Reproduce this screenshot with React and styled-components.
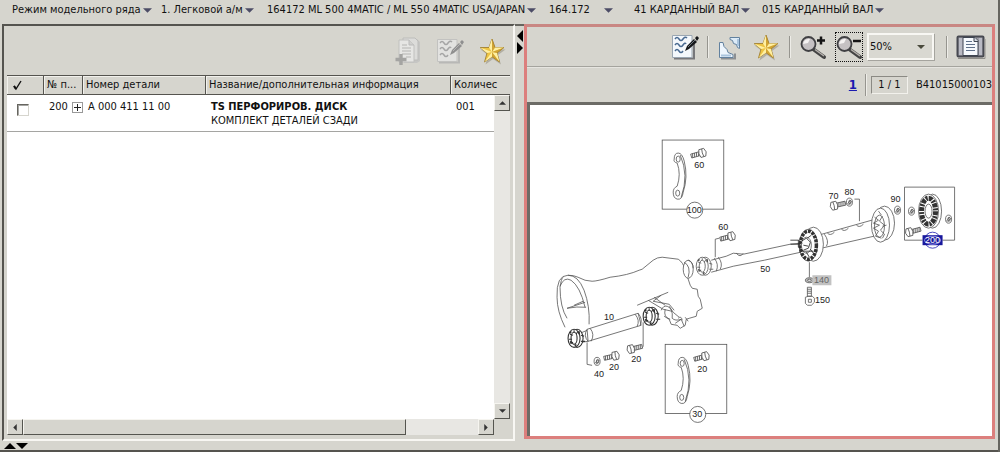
import React from 'react'
import styled, { createGlobalStyle, css } from 'styled-components'

const menuItems = [
  { text: 'Режим модельного ряда', width: 149 },
  { text: '1. Легковой а/м', width: 106 },
  { text: '164172 ML 500 4MATIC / ML 550 4MATIC USA/JAPAN', width: 282 },
  { text: '164.172', width: 85, wide: true },
  { text: '41 КАРДАННЫЙ ВАЛ', width: 128 },
  { text: '015 КАРДАННЫЙ ВАЛ', width: 140 },
]

const App = () => {
  return (
    <Page>
      <GlobalStyle />
      <MenuBar>
        {menuItems.map((item) => (
          <MenuButton key={item.text} $width={item.width} $wide={item.wide}>
            {item.text}
            <Triangle dir="down" size={9} color="#4c4c66" />
          </MenuButton>
        ))}
      </MenuBar>
      <Main>
        <PartsPanel />
        <Splitter>
          <Triangle dir="left" size={12} color="#000" />
          <Triangle dir="right" size={12} color="#000" />
        </Splitter>
        <PicturePanel />
      </Main>
      <BottomSplitter>
        <Triangle dir="up" size={12} color="#000" />
        <Triangle dir="down" size={12} color="#000" />
      </BottomSplitter>
    </Page>
  )
}

const PartsPanel = () => (
  <Panel>
    <PartsToolbar>
      <IconButton $width={28} aria-label="Добавить" disabled><CopyIcon /></IconButton>
      <IconButton $width={28} aria-label="Заметка" disabled><NoteIcon faded /></IconButton>
      <IconButton $width={28} aria-label="Избранное"><StarIcon /></IconButton>
    </PartsToolbar>
    <TableFrame>
      <TableArea>
        <Table>
          <colgroup>
            <col width="37" />
            <col width="39" />
            <col width="123" />
            <col width="245" />
            <col />
          </colgroup>
          <thead>
            <tr>
              <Th aria-label="Выбор"><CheckMark /></Th>
              <Th>№ п...</Th>
              <Th>Номер детали</Th>
              <Th>Название/дополнительная информация</Th>
              <Th>Количес</Th>
            </tr>
          </thead>
          <tbody>
            <tr>
              <Td><Check type="checkbox" aria-label="Выбрать деталь 200" /></Td>
              <Td>
                <Position>
                  200
                  <Expand aria-label="Развернуть">
                    <svg width="7" height="7"><path d="M0 3.5h7M3.5 0v7" stroke="#222" /></svg>
                  </Expand>
                </Position>
              </Td>
              <Td $indent>A 000 411 11 00</Td>
              <Td $indent><b>TS ПЕРФОРИРОВ. ДИСК</b><br />КОМПЛЕКТ ДЕТАЛЕЙ СЗАДИ</Td>
              <Td $indent>001</Td>
            </tr>
          </tbody>
        </Table>
      </TableArea>
      <VerticalBar>
        <ScrollButton aria-label="Вверх"><Triangle dir="up" size={7} color="#333" /></ScrollButton>
        <ScrollButton aria-label="Вниз"><Triangle dir="down" size={7} color="#333" /></ScrollButton>
      </VerticalBar>
      <HorizontalBar>
        <ScrollButton aria-label="Влево"><Triangle dir="left" size={7} color="#333" /></ScrollButton>
        <Track><Thumb /></Track>
        <ScrollButton aria-label="Вправо"><Triangle dir="right" size={7} color="#333" /></ScrollButton>
      </HorizontalBar>
    </TableFrame>
  </Panel>
)

const PicturePanel = () => (
  <RedPanel>
    <PictureToolbar>
      <IconButton $width={28} aria-label="Заметка"><NoteIcon /></IconButton>
      <Divider />
      <IconButton $width={26} aria-label="Ссылка"><LinkIcon /></IconButton>
      <IconButton $width={30} aria-label="Избранное"><StarIcon /></IconButton>
      <Divider />
      <IconButton $width={28} aria-label="Увеличить"><ZoomIcon plus /></IconButton>
      <ZoomGroup>
        <IconButton $width={28} $focused aria-label="Уменьшить"><ZoomIcon /></IconButton>
        <SelectBox>
          <select aria-label="Масштаб" defaultValue="50%">
            <option>50%</option>
            <option>100%</option>
          </select>
          <Triangle dir="down" size={8} color="#4a4a3c" />
        </SelectBox>
      </ZoomGroup>
      <Divider />
      <IconButton $width={30} aria-label="Страница"><BookIcon /></IconButton>
    </PictureToolbar>
    <PageBar>
      <PageLink href="#1">1</PageLink>
      <PageInfo>
        <Divider />
        <Counter>1 / 1</Counter>
      </PageInfo>
      <span>B41015000103</span>
    </PageBar>
    <Canvas>
      <Diagram />
    </Canvas>
  </RedPanel>
)

const points = {
  down: '0,0 10,0 5,5',
  up: '0,5 10,5 5,0',
  left: '5,0 5,10 0,5',
  right: '0,0 0,10 5,5',
}

const Triangle = ({ dir, size, color }) => {
  const flat = dir === 'up' || dir === 'down'
  return (
    <svg
      width={flat ? size : Math.ceil(size / 2)}
      height={flat ? Math.ceil(size / 2) : size}
      viewBox={flat ? '0 0 10 5' : '0 0 5 10'}
      aria-hidden="true"
    >
      <polygon points={points[dir]} fill={color} />
    </svg>
  )
}

const CheckMark = () => (
  <svg width="10" height="11" viewBox="0 0 10 11">
    <path d="M1 6l2 3L8 1" fill="none" stroke="#111" strokeWidth="1.4" />
    <path d="M1 6l2 3" stroke="#111" strokeWidth="2" />
  </svg>
)

const CopyIcon = () => (
  <svg width="28" height="30" viewBox="0 0 28 30">
    <path d="M10 3h13l3 3v19l-3 2H10z" fill="#c6c6c4" />
    <path d="M9 2h12l3 3v19H9z" fill="#dcdcda" stroke="#bcbcba" />
    <path d="M5 4h10l5 5v17H5z" fill="#e6e6e4" stroke="#c0c0be" />
    <path d="M15 4v5h5" fill="#d0d0ce" stroke="#bababa" />
    <path d="M8 9h5M8 12h9M8 15h9M8 18h9M12 21h5" stroke="#b4b4b2" />
    <path d="M7 18v11M1.500 23.500h11" stroke="#a4a4a2" strokeWidth="3.400" />
  </svg>
)

const NoteIcon = ({ faded }) => {
  const ink = faded ? '#a5a5a5' : '#496a91'
  return (
    <svg width="28" height="28" viewBox="0 0 28 28">
      <path d="M3 25.500h20V9" fill="none" stroke={faded ? '#b8b8b6' : '#77777a'} strokeWidth="2" />
      <path d="M1.500 2.500h19.500v22H1.500z" fill={faded ? '#e2e2e0' : '#f4f8fc'} stroke={faded ? '#c2c2c0' : '#9aa6b2'} />
      <path
        d="M4 6q2-3 4 0t4 0 4-1M4 12q2-3 4 0t4 0 3-1M4 18q2-3 4 0t4 0"
        fill="none"
        stroke={ink}
        strokeWidth="1.500"
      />
      <path d="M14 18l2-5 7-7 3 3-8 7z" fill={faded ? '#8f8f8f' : '#15171a'} />
      <path d="M24 5l2-2 2 2-2 3z" fill={faded ? '#8f8f8f' : '#15171a'} />
      <path d="M17 14l7-7" stroke={faded ? '#b5b5b5' : '#6e7880'} />
    </svg>
  )
}

const StarIcon = () => (
  <svg width="28" height="28" viewBox="0 0 28 28">
    <path d="M14 3l3 8.500h9.500l-7.500 5.500 3 9.500-8-5.500-7.500 5.500 2.500-9.500L1.500 11.500H11z" fill="#8d8876" opacity=".5" transform="translate(1 1)" />
    <path d="M14 2l3 8.500h9l-7 5.500 2.500 9-7.500-5.300L6.500 25 9 16l-7-5.500h9z" fill="#edc444" stroke="#99772a" strokeWidth=".8" />
    <path d="M14 2v13l-3-4.500zM26 10.500L14 15l3-4.500zM21.500 25L14 15l5 1zM6.500 25L14 15v4.700zM2 10.500L14 15l-5 1z" fill="#fff0a2" />
    <path d="M14 2v13l3-4.500zM26 10.500L14 15l5 1zM21.500 25L14 15v4.700z" fill="#b98a26" opacity=".55" />
  </svg>
)

const LinkIcon = () => (
  <svg width="24" height="26" viewBox="0 0 24 26">
    <path d="M3 24.500h14v-5" fill="none" stroke="#8c8f92" strokeWidth="2" />
    <path d="M1.500 8.500H5l1 4 3 3 1 3 5 2v3H1.500z" fill="#edf5fd" stroke="#62819f" />
    <path d="M12 3.500h9.500v11l-2-1-1-3-3-1-1-3-2.500-1z" fill="#dcebf8" stroke="#62819f" />
    <path d="M3 21.500h10M20 5v7" stroke="#a9c4dd" strokeWidth="2" />
  </svg>
)

const ZoomIcon = ({ plus }) => (
  <svg width="28" height="28" viewBox="0 0 28 28">
    <path d="M14 16l11 8" stroke="#444" strokeWidth="4" strokeLinecap="round" />
    <path d="M16 16.500l9 6.500" stroke="#b7b3ae" strokeWidth="1.500" />
    <circle cx="9.500" cy="11" r="7" fill="#c5c1c3" stroke="#404043" strokeWidth="1.800" />
    <path d="M4 11a6 6 0 0 1 7-5l-2 4z" fill="#f4f2f2" />
    <path d={plus ? 'M18 7.500h8M22 3.500v8' : 'M18 8h8'} stroke="#151515" strokeWidth="2.500" />
  </svg>
)

const BookIcon = () => (
  <svg width="30" height="26" viewBox="0 0 30 26">
    <rect x="1.500" y="2.500" width="26" height="20" rx="1" fill="#9c9da6" stroke="#474951" strokeWidth="2" />
    <path d="M3 4h4v17H3zM23 4h3v17h-3z" fill="#b9bac4" />
    <path d="M7 3.500h12l3 3v15H7z" fill="#f6f9fd" stroke="#3e4552" />
    <path d="M18 3.500v4h4" fill="#d2d8e0" stroke="#3e4552" />
    <path d="M10 7.500h6M10 10.500h9M10 13.500h9M10 16.500h9" stroke="#60718a" />
    <path d="M2 24.500h27V5" fill="none" stroke="#908f8a" />
  </svg>
)

// Parts of the exploded view
const Bolt = ({ x, y, angle }) => (
  <g transform={`translate(${x} ${y}) rotate(${angle})`}>
    <path d="M0 -2h9v4H0zM2 -2l-1 4M4 -2l-1 4M6 -2l-1 4M8 -2l-1 4" />
    <path d="M9 -4h5q3 4 0 8H9q-2-4 0-8zM12 -4q-1 4 0 8" />
  </g>
)

const Washer = ({ x, y }) => (
  <g transform={`translate(${x} ${y})`}>
    <ellipse rx="3" ry="4" />
    <ellipse cx=".5" rx="1.200" ry="2" />
    <path d="M-2 2l3-4M-1 3l3-4" />
  </g>
)

const Strap = ({ x, y }) => (
  <g transform={`translate(${x} ${y})`}>
    <path d="M-4 2q0-6 4-6 4 0 6 8 4 16-1 31-1 8-6 7-4-1-4-7 0-4 4-6 4-12 0-23-4-1-3-4z" />
    <path d="M2-2q9 20 1 42" fill="none" />
    <ellipse cy="2" rx="2" ry="3" />
    <ellipse cx="-.5" cy="36" rx="2" ry="3" />
  </g>
)

const Yoke = ({ x, y, dark }) => (
  <g transform={`translate(${x} ${y})`} strokeWidth={dark ? 1.1 : 0.8}>
    <ellipse cx="2" rx="6" ry="9" />
    <ellipse cx="-1" rx="6" ry="9" />
    <ellipse cx="-1" rx="3" ry="6" />
    <path d="M-5-4l3 1M-6 1h3M-5 5l3-1M-1-8v2M3-7l-2 3M6-3l3 1M6 3h4" fill="none" />
    <path d="M-5-5l1-2M-5 3l2 2M0 8l1-2M4-7v3" strokeWidth="1.600" />
  </g>
)

const Diagram = () => (
  <Drawing viewBox="530 105 461 329" preserveAspectRatio="xMinYMin meet" role="img" aria-label="Карданный вал">
    <g fill="#fff" stroke="#555" strokeWidth=".8">
      {/* gearbox housing */}
      <path d="M565 327q-8-16-8-30-1-22 11-22 10 0 16 15 6 16 5 34M563 277q-2 2-3 10 0 20 7 31M560 286q4-10 11-6 9 6 14 27" fill="none" />
      <path d="M567 308l18-6M567 308q10-2 19-1M574 305l9-4M568 275q6 0 10 2 7 4 14 4 5 0 18-4 18-2 29-7l3-1 11-9q4-3 9-3l16 2q5 3 7 11l5 15 2 3 5 1 1 7 2 3 2 9-5 3-1 5-7 2-3 1-1 6-5 3-3-3-6-1-2-5-5-3" fill="none" />
      <path d="M637 305l31-13M648 300l15 9 9 2M654 297l11 8M661 295l-8 6 16 3 5 6M661 310q2-5 6-4 6 2 5 12 3 3 9 1M665 309q-2 8 5 10M678 318q3-3 4 2M675 323l6-4 3 7M685 317l3 4M669 306l4 6 6 5" fill="none" />
      <ellipse cx="688" cy="269" rx="5" ry="9" />
      <path d="M684 262q7 4 4 15M688 260q5 2 5 8" fill="none" />

      {/* lower shaft */}
      <path d="M587 329l51-16 3 12-53 16z" />
      <path d="M590 328q5 6 1 13M587 329q-4 6 1 12M638 313q5 6 2 12M635 314q5 6 2 12M580 333l7-3M581 342l7-1" fill="none" />
      <g stroke="#333">
        <Yoke x={575} y={338} dark />
        <Yoke x={650} y={316} dark />
      </g>
      <path d="M587 342v22l5 1M643 322v24l-2 2" fill="none" />
      <Washer x={597} y={361} />
      <Bolt x={604} y={358} angle={-13} />
      <Bolt x={642} y={346} angle={166} />

      {/* front shaft */}
      <path d="M711 260l15-4 7-3 10 1 47-10 11-1 4 8-41 9-31 6-22 4z" stroke="none" />
      <path d="M711 260l15-4 7-3 10 1 47-10 11-1M711 272l22-6 31-6 41-9M718 257q5 6 2 12M714 258q5 6 2 13M736 253q4 5 7 0" fill="none" />
      <Yoke x={703} y={266} />
      <path d="M715 257v-18l4-1" fill="none" />
      <Bolt x={720} y={239} angle={-15} />

      {/* rear shaft */}
      <path d="M818 235l57-16 3 16-57 13z" />
      <path d="M827 233q3 3 7-1M841 229q3 3 7-1M856 225q3 3 7-1M824 234q5 7 2 12" fill="none" />
      <ellipse cx="884" cy="223" rx="10" ry="17" />
      <ellipse cx="880" cy="225" rx="9" ry="17" />
      <ellipse cx="879" cy="226" rx="5" ry="11" />
      <path d="M874 217l4 3-5 3 6 2-6 3 5 3-3 5 6 2M882 216l-3 5 5 4-4 5 4 4-2 4M878 211l3 4M886 225l-4 1" fill="none" />
      <path d="M859 221v-22h-5" fill="none" />
      <Bolt x={845} y={203} angle={167} />
      <Washer x={849} y={202} />
      <Washer x={897} y={210} />

      {/* centre coupling */}
      <ellipse cx="813" cy="244" rx="10" ry="17" />
      <ellipse cx="808" cy="245" rx="9" ry="16" />
      <ellipse cx="808" cy="245" rx="8" ry="14" fill="none" stroke="#333" strokeWidth="3.500" strokeDasharray="3 1" />
      <ellipse cx="806" cy="245" rx="5" ry="8" />
      <path d="M790 240h8l4 3M790 244h10M798 240v7l5 4h10M801 241l5-3 4 4-2 6-5 2M803 245l5 1M811 235l-4 3M810 249l3 4M806 252l3 5" fill="none" stroke="#222" />
      <path d="M809 262v15" fill="none" />
      <ellipse cx="809" cy="280" rx="4" ry="2.500" fill="#bbb" />
      <ellipse cx="809" cy="280" rx="2" ry="1" />
      <path d="M807 287h4v9h-4zM807 289h4M807 291h4M807 293h4M805 297l3-1h4l2 2v4l-3 3h-4l-2-2zM808 299h3v3h-3z" />

      {/* boxed kits */}
      <rect x="662" y="140" width="61.500" height="69" />
      <Strap x={678} y={157} />
      <Bolt x={691} y={156} angle={-16} />
      <circle cx="694.500" cy="210" r="8" />
      <rect x="665" y="344" width="61.500" height="69" />
      <Strap x={682} y={361} />
      <Bolt x={694} y={359} angle={-16} />
      <circle cx="697.500" cy="414" r="8" />
      <path d="M904 240v-53h50v53M904 240h18M942 240h12" fill="none" />
      <Washer x={911} y={211} />
      <Washer x={948} y={219} />
      <ellipse cx="932" cy="211" rx="9" ry="17" />
      <ellipse cx="928" cy="211" rx="10" ry="17" />
      <ellipse cx="928" cy="211" rx="7" ry="13" fill="none" stroke="#333" strokeWidth="5" strokeDasharray="4 1 2 1" />
      <ellipse cx="928" cy="211" rx="3.500" ry="7" />
      <Bolt x={920} y={229} angle={165} />
      <circle cx="932" cy="240" r="8" stroke="#2020b0" />
    </g>
    <rect x="812" y="275" width="19" height="10" fill="#c2c2c2" />
    <rect x="922" y="235" width="20" height="10" fill="#18189c" />
    <ellipse cx="932" cy="240" rx="8" ry="4" fill="none" stroke="#8585e0" />
    <g fontFamily="Liberation Sans, Arial, sans-serif" fontSize="9" fill="#222" textAnchor="middle">
      <text x="699" y="168">60</text>
      <text x="694" y="213">100</text>
      <text x="723" y="230">60</text>
      <text x="765" y="272">50</text>
      <text x="833" y="199">70</text>
      <text x="849" y="195">80</text>
      <text x="895" y="202">90</text>
      <text x="821" y="283" fill="#666">140</text>
      <text x="822" y="303">150</text>
      <text x="609" y="320">10</text>
      <text x="599" y="377">40</text>
      <text x="614" y="370">20</text>
      <text x="636" y="362">20</text>
      <text x="702" y="372">20</text>
      <text x="697" y="417">30</text>
      <text x="932" y="243" fill="#fff">200</text>
    </g>
  </Drawing>
)

const GlobalStyle = createGlobalStyle`
  * {
    box-sizing: border-box;
  }
  body {
    margin: 0;
    background: #d6d5ce;
    color: #111;
    font: 11px/14px Tahoma, "DejaVu Sans Condensed", sans-serif;
  }
  button, select {
    font: inherit;
    color: inherit;
  }
  svg {
    display: block;
    flex: none;
  }
`
const raised = css`
  border: 1px solid;
  border-color: #f6f5f0 #55554f #55554f #f6f5f0;
`
const Page = styled.div`
  min-height: 100vh;
  display: flex;
  flex-direction: column;
  border-right: 2px solid #66655f;
  overflow: hidden;
`
const MenuBar = styled.nav`
  display: flex;
  height: 24px;
  padding: 0 0 4px 12px;
`
const MenuButton = styled.button`
  display: flex;
  flex: 0 0 ${(p) => p.$width}px;
  align-items: center;
  gap: ${(p) => (p.$wide ? 14 : 2)}px;
  padding: 0;
  border: 0;
  background: none;
  white-space: nowrap;
`
const Main = styled.main`
  flex: 1;
  display: flex;
  padding: 0 3px 0 2px;
`
const Panel = styled.section`
  flex: 0 0 calc(52% - 3px);
  min-width: 0;
  display: flex;
  flex-direction: column;
  padding: 0 3px 4px;
  border: 2px solid;
  border-color: #55544f #f8f7f3 #f8f7f3 #55544f;
`
const PartsToolbar = styled.div`
  display: flex;
  justify-content: flex-end;
  align-items: center;
  gap: 14px;
  height: 49px;
  padding-right: 4px;
`
const IconButton = styled.button`
  display: flex;
  justify-content: center;
  align-items: center;
  width: ${(p) => p.$width}px;
  height: 30px;
  padding: 0;
  border: ${(p) => (p.$focused ? '1px dotted #111' : '0')};
  background: none;
`
const TableFrame = styled.div`
  flex: 1;
  display: grid;
  grid-template: 1fr 16px / minmax(0, 1fr) 16px;
  border-top: 1px solid #55544f;
`
const TableArea = styled.div`
  grid-area: 1 / 1 / 2 / 3;
  overflow: hidden;
  background: #fff;
`
const Table = styled.table`
  width: 100%;
  table-layout: fixed;
  border-collapse: separate;
  border-spacing: 0;
`
const Th = styled.th`
  height: 19px;
  padding: 0 0 0 3px;
  background: #d6d5ce;
  border-right: 1px solid #55544f;
  border-bottom: 1px solid #55544f;
  box-shadow: inset 1px 1px #f2f1ec;
  font-weight: normal;
  text-align: left;
  white-space: nowrap;
  &:first-child {
    padding-left: 6px;
  }
  &:last-child {
    border-right: 0;
  }
`
const Td = styled.td`
  height: 37px;
  padding: 5px 0 0 ${(p) => (p.$indent ? 5 : 4)}px;
  border-bottom: 1px solid #a5a5a2;
  vertical-align: top;
  white-space: nowrap;
`
const Check = styled.input`
  appearance: none;
  display: block;
  width: 12px;
  height: 12px;
  margin: 4px 0 0 6px;
  border: 1px solid;
  border-color: #66655f #d6d5ce #d6d5ce #66655f;
  box-shadow: inset 1px 1px #a5a5a2;
`
const Position = styled.div`
  display: flex;
  justify-content: space-between;
  align-items: center;
  height: 14px;
  padding-left: 1px;
`
const Expand = styled.button`
  display: flex;
  align-items: center;
  justify-content: center;
  width: 11px;
  height: 11px;
  padding: 0;
  border: 1px solid #999;
  background: #fff;
`
const VerticalBar = styled.div`
  grid-area: 1 / 2;
  display: flex;
  flex-direction: column;
  justify-content: space-between;
  margin-top: 19px;
  background: #e8e7e3;
`
const HorizontalBar = styled.div`
  display: flex;
  background: #e8e7e3;
`
const ScrollButton = styled.button`
  ${raised}
  display: flex;
  align-items: center;
  justify-content: center;
  flex: none;
  width: 16px;
  height: 16px;
  padding: 0;
  background: #d6d5ce;
`
const Track = styled.div`
  flex: 1;
`
const Thumb = styled.div`
  ${raised}
  width: 84%;
  height: 16px;
  background: #d6d5ce;
`
const Splitter = styled.div`
  flex: 0 0 9px;
  display: flex;
  flex-direction: column;
  align-items: center;
  padding-top: 4px;
  border-top: 2px solid #66655f;
`
const RedPanel = styled.section`
  flex: 1;
  min-width: 0;
  display: flex;
  flex-direction: column;
  margin-bottom: 2px;
  border: 3px solid #dc7f7d;
  border-top-color: #c98783;
`
const PictureToolbar = styled.div`
  display: flex;
  justify-content: flex-end;
  align-items: center;
  gap: 8px;
  height: 40px;
  padding-right: 6px;
  border-bottom: 1px solid #a5a49e;
`
const Divider = styled.span`
  width: 2px;
  height: 22px;
  border-left: 1px solid #96958f;
  border-right: 1px solid #eeede8;
`
const ZoomGroup = styled.div`
  display: flex;
  align-items: center;
  gap: 4px;
  margin-right: 4px;
`
const SelectBox = styled.div`
  position: relative;
  select {
    appearance: none;
    display: block;
    width: 67px;
    height: 27px;
    padding: 0 1px;
    border: 2px solid #f8f7f3;
    border-radius: 0;
    background: #d9d8d1;
    box-shadow: 1px 1px #a5a49e;
  }
  svg {
    position: absolute;
    right: 9px;
    top: 12px;
    pointer-events: none;
  }
`
const PageBar = styled.div`
  display: flex;
  justify-content: flex-end;
  align-items: center;
  gap: 8px;
  height: 35px;
  border-top: 1px solid #e6e5e0;
`
const PageLink = styled.a`
  color: #1a1ab0;
  font-size: 13px;
  font-weight: bold;
`
const PageInfo = styled.div`
  display: flex;
  align-items: center;
  gap: 4px;
`
const Counter = styled.span`
  width: 37px;
  border: 1px solid;
  border-color: #8b8a84 #f2f1ec #f2f1ec #8b8a84;
  line-height: 16px;
  text-align: center;
`
const Canvas = styled.div`
  flex: 1;
  background: #fff;
  border: solid #6c6b66;
  border-width: 3px 0 0 3px;
`
const Drawing = styled.svg`
  width: 100%;
  height: auto;
`
const BottomSplitter = styled.div`
  display: flex;
  align-items: center;
  height: 11px;
  padding-left: 4px;
  border-bottom: 2px solid #55544f;
`

export default App
